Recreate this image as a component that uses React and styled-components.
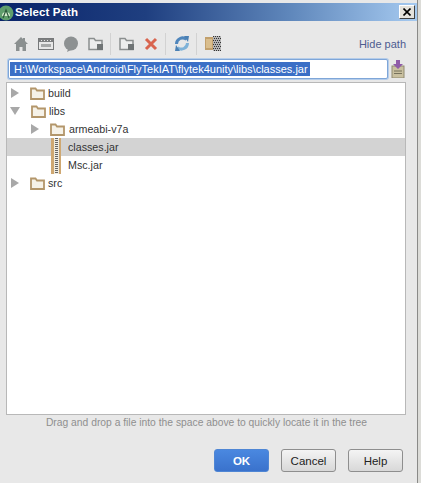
import React from "react";
import styled, { createGlobalStyle } from "styled-components";

const Global = createGlobalStyle`
  html, body { margin: 0; padding: 0; background: #e8e8e8; }
  #root { width: 421px; height: 483px; overflow: hidden; }
  * { box-sizing: border-box; }
`;

const Win = styled.div`
  width: 421px; height: 483px; background: #e8e8e8; padding-top: 3px;
  display: flex; flex-direction: column;
  font-family: "Liberation Sans", Arial, sans-serif;
  border-right: 3px solid #dcdcd8;
  box-shadow: inset -1px 0 0 #8a8a88;
`;
const TitleBar = styled.div`
  height: 18px; margin-right: 1px; padding: 0 2px 0 0; display: flex; align-items: center;
  background: linear-gradient(90deg, #0a246a 0%, #1f3f80 35%, #6088bc 70%, #a6caf0 100%);
`;
const TitleText = styled.span`
  color: #fff; font: bold 11.5px "Liberation Sans", sans-serif; margin-left: 1px; flex: 1; letter-spacing: .1px;
`;
const CloseBtn = styled.div`
  width: 16px; height: 14px; background: #e4e2dc; border: 1px solid; border-color: #fff #404040 #404040 #fff;
  display: flex; align-items: center; justify-content: center;
`;
const Toolbar = styled.div`
  height: 39px; display: flex; align-items: center; padding: 6px 13px 0 12px;
`;
const Tool = styled.div`
  width: 17px; height: 17px; margin-right: ${p => p.$gap}px; display: flex; align-items: center; justify-content: center; flex: none;
`;
const Sep = styled.div`
  width: 1px; height: 22px; background: #d2d2d2; margin-right: ${p => p.$gap}px; flex: none;
`;
const HideLink = styled.span`
  margin-left: auto; color: #4e5c90; font-size: 11px; padding-top: 1px; margin-right: -1px;
`;
const PathRow = styled.div`
  display: flex; align-items: center; padding: 0 11px 0 8px; height: 20px; margin-top: -1px;
`;
const PathField = styled.div`
  width: 380px; height: 20px; background: #fff; border: 1px solid #7fa6d8; box-shadow: 0 0 0 1px #b5cdea;
  border-radius: 2px; padding: 2px 1px; display: flex; align-items: stretch;
`;
const Selected = styled.span`
  background: #3b6fc6; color: #fff; font-size: 11px; line-height: 14px; padding: 0 2px 0 4px; white-space: nowrap;
`;
const SaveIcon = styled.div`
  margin-left: 3px; width: 14px; height: 18px; flex: none;
`;
const Tree = styled.div`
  margin: 3px 0 0 6px; width: 400px; height: 333px; background: #fff; border: 1px solid #b8b8b8; padding-top: 1px;
`;
const Row = styled.div`
  height: 18px; display: flex; align-items: center; padding-left: ${p => p.$indent}px;
  background: ${p => (p.$active ? "#d3d3d3" : "transparent")};
  font-size: 10.7px; color: #333;
`;
const Arrow = styled.span`
  width: 0; height: 0; flex: none; display: block;
  ${p => p.$down
    ? "border-left:5px solid transparent;border-right:5px solid transparent;border-top:8px solid #a8a8a8;margin-left:-1px;margin-right:11px;"
    : "border-top:5px solid transparent;border-bottom:5px solid transparent;border-left:8px solid #a8a8a8;margin-right:11px;"}
`;
const Label = styled.span` margin-left: ${p => p.$gap ?? 3}px; `;
const Hint = styled.div`
  text-align: center; color: #8f8f8f; font-size: 10.3px; margin-top: 2px; padding: 0 10px 0 5px; height: 32px;
`;
const Buttons = styled.div`
  display: flex; justify-content: flex-end; gap: 12px; padding-right: 15px;
`;
const Btn = styled.div`
  width: 55px; height: 23px; border-radius: 3px; display: flex; align-items: center; justify-content: center; font-size: 11.5px;
  ${p => p.$primary
    ? "background:linear-gradient(#4a88e0,#3a72cc);border:1px solid #4f86d4;color:#fff;font-weight:bold;"
    : "background:linear-gradient(#f4f4f4,#d8d8d8);border:1px solid #8e8e8e;color:#222;"}
`;

const Folder = () => (
  <svg width="15" height="13" viewBox="0 0 15 13" style={{ flex: "none" }}>
    <path d="M1 12V1.5h4.5l1.5 2h7V12z" fill="#f6f2e8" stroke="#b3966a" strokeWidth="1.8" />
  </svg>
);
const Jar = () => (
  <svg width="10" height="18" viewBox="0 0 10 18" style={{ flex: "none" }}>
    <rect x="0" y="0" width="10" height="18" fill="#cfa872" />
    <rect x="3" y="0" width="5" height="18" fill="#f0ece0" />
    {[0, 2, 4, 6, 8, 10, 12, 14, 16].map(y => <rect key={y} x="4" y={y} width="3" height="1" fill="#666" />)}
  </svg>
);
const Home = () => (
  <svg width="16" height="16" viewBox="0 0 16 16">
    <path d="M8 1L1 8h2v7h3.5v-4h3v4H13V8h2l-3-3V2h-2v1z" fill="#8b9090" />
  </svg>
);
const Desk = () => (
  <svg width="16" height="14" viewBox="0 0 16 14">
    <rect x="0.5" y="1.5" width="15" height="11" fill="#e8e8e8" stroke="#77797a" />
    <rect x="1" y="2" width="14" height="3" fill="#7d7f80" />
    <path d="M3 3.5h1M6 3.5h1M9 3.5h1M12 3.5h1" stroke="#e8e8e8" />
    <rect x="3" y="7" width="10" height="3" fill="#a6a8a8" />
  </svg>
);
const Bubble = () => (
  <svg width="16" height="16" viewBox="0 0 16 16"><circle cx="8" cy="7.5" r="7" fill="#8d9192" /><path d="M5 13l-1 3 4-2z" fill="#8d9192" /></svg>
);
const GFolder = () => (
  <svg width="16" height="14" viewBox="0 0 16 14">
    <path d="M1 12.5V1.5h5l1.5 2H14v9z" fill="#eceded" stroke="#8a8e8e" strokeWidth="1.5" />
    <rect x="9" y="7" width="6" height="6" fill="#6f7475" />
  </svg>
);
const Cross = () => (
  <svg width="14" height="14" viewBox="0 0 14 14"><path d="M2 2l10 10M12 2L2 12" stroke="#d9654f" strokeWidth="3" /></svg>
);
const Sync = () => (
  <svg width="16" height="17" viewBox="0 0 16 17">
    <path d="M2.5 9a6 6 0 0 1 10-4.5" fill="none" stroke="#4f86bc" strokeWidth="3" />
    <path d="M13.5 8a6 6 0 0 1-10 4.5" fill="none" stroke="#7fb2d8" strokeWidth="3" />
    <path d="M10 1l5 0-1 6z" fill="#4a80b4" /><path d="M6 16l-5 0 1-6z" fill="#4a80b4" />
  </svg>
);
const Tile = () => (
  <svg width="16" height="15" viewBox="0 0 16 15">
    <rect x="0" y="1" width="10" height="13" fill="#c2a06c" />
    <rect x="1" y="3" width="6" height="9" fill="#d9bd8c" />
    <rect x="8" y="0" width="8" height="15" fill="#b4b4b4" />
    {[0, 2, 4, 6, 8, 10, 12, 14].flatMap(y => [8, 10, 12, 14].map(x => <rect key={x + "-" + y} x={x + (y % 4 ? 1 : 0)} y={y} width="1" height="1" fill="#333" />))}
  </svg>
);

export default function App() {
  return (
    <Win>
      <Global />
      <TitleBar>
        <svg width="14" height="18" viewBox="0 0 14 18" style={{ flex: "none" }}>
          <circle cx="6" cy="10" r="7.5" fill="#5f9e6c" />
          <path d="M2 13a4 4 0 0 1 8 0z" fill="#d8eed0" />
          <path d="M3 15L6 7l3 8" fill="none" stroke="#2c5a3c" strokeWidth="1.2" />
        </svg>
        <TitleText>Select Path</TitleText>
        <CloseBtn>
          <svg width="8" height="8" viewBox="0 0 8 8"><path d="M.5.5l7 7M7.5.5l-7 7" stroke="#000" strokeWidth="1.6" /></svg>
        </CloseBtn>
      </TitleBar>
      <Toolbar>
        <Tool $gap={8}><Home /></Tool>
        <Tool $gap={8}><Desk /></Tool>
        <Tool $gap={8}><Bubble /></Tool>
        <Tool $gap={6}><GFolder /></Tool>
        <Sep $gap={7} />
        <Tool $gap={7}><GFolder /></Tool>
        <Tool $gap={6}><Cross /></Tool>
        <Sep $gap={7} />
        <Tool $gap={6}><Sync /></Tool>
        <Sep $gap={7} />
        <Tool $gap={0}><Tile /></Tool>
        <HideLink>Hide path</HideLink>
      </Toolbar>
      <PathRow>
        <PathField>
          <Selected>H:\Workspace\Android\FlyTekIAT\flytek4unity\libs\classes.jar</Selected>
        </PathField>
        <SaveIcon>
          <svg width="14" height="18" viewBox="0 0 14 18">
            <rect x="1" y="6" width="12" height="12" fill="#c9c0a0" stroke="#8f8a70" />
            <path d="M3 11h8M3 13.5h8" stroke="#77725c" />
            <path d="M5 0h4v4h3l-5 5-5-5h3z" fill="#8f5ba8" />
          </svg>
        </SaveIcon>
      </PathRow>
      <Tree>
        <Row $indent={4}><Arrow /><Folder /><Label>build</Label></Row>
        <Row $indent={4}><Arrow $down /><Folder /><Label>libs</Label></Row>
        <Row $indent={24}><Arrow /><Folder /><Label $gap={4}>armeabi-v7a</Label></Row>
        <Row $active $indent={44}><Jar /><Label $gap={7}>classes.jar</Label></Row>
        <Row $indent={44}><Jar /><Label $gap={7}>Msc.jar</Label></Row>
        <Row $indent={4}><Arrow /><Folder /><Label>src</Label></Row>
      </Tree>
      <Hint>Drag and drop a file into the space above to quickly locate it in the tree</Hint>
      <Buttons>
        <Btn $primary>OK</Btn>
        <Btn>Cancel</Btn>
        <Btn>Help</Btn>
      </Buttons>
    </Win>
  );
}
